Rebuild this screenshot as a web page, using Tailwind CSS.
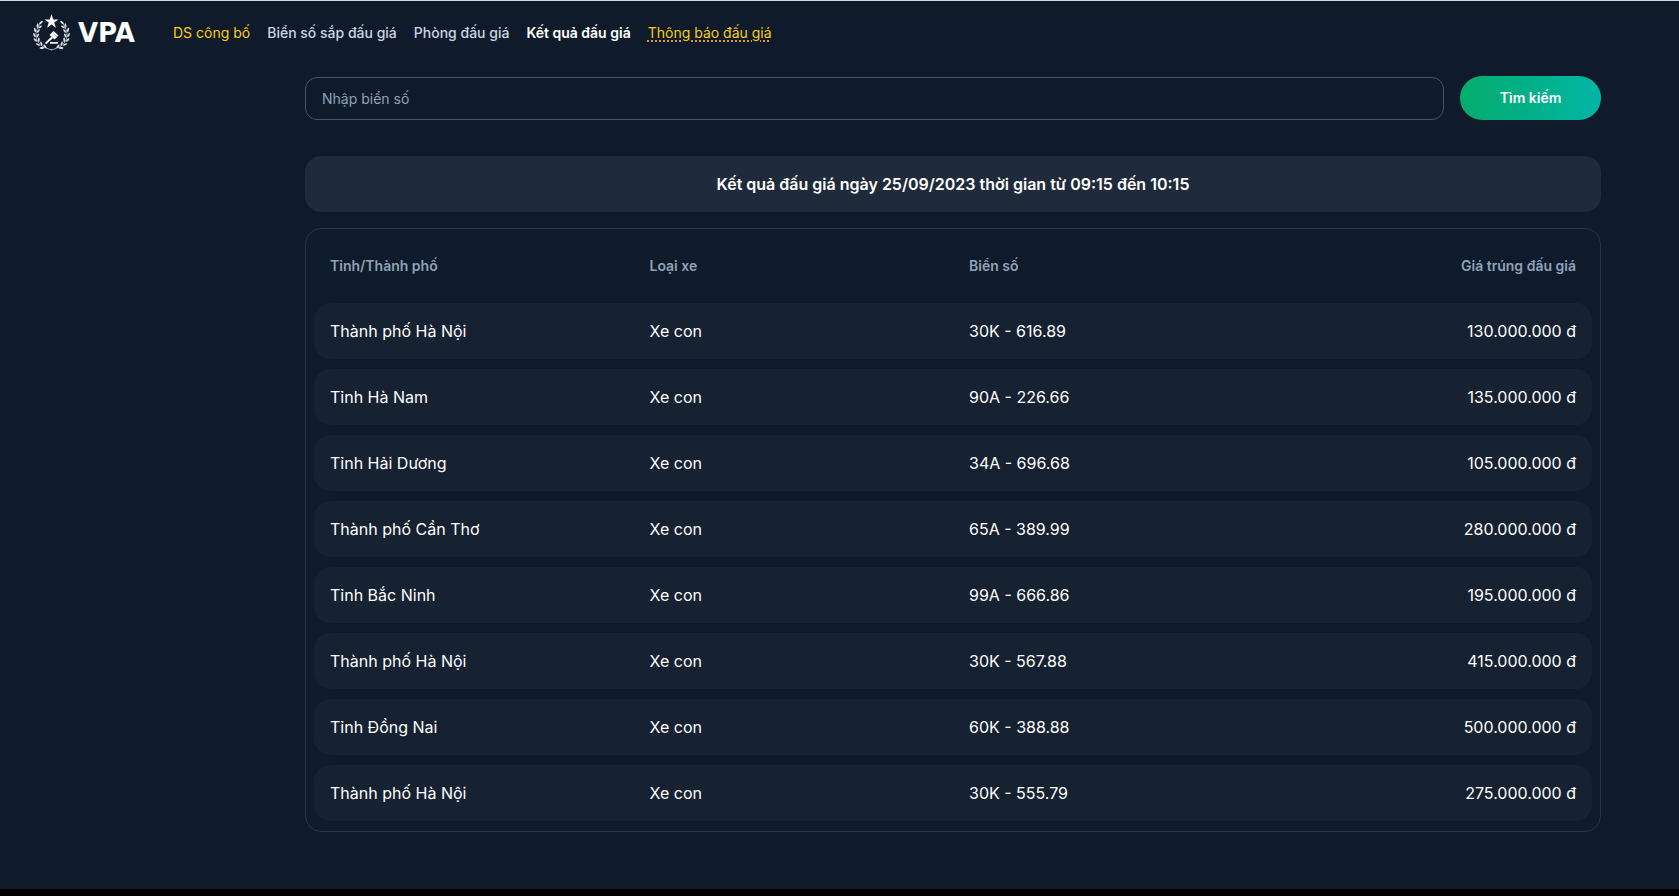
<!DOCTYPE html>
<html lang="vi">
<head>
    <meta charset="UTF-8">
    <meta name="viewport" content="width=device-width, initial-scale=1.0">
    <title>VPA - Kết quả đấu giá</title>
    <script src="https://cdn.jsdelivr.net/npm/@tailwindcss/browser@4"></script>
</head>
<body class="flex min-h-screen flex-col border-t border-b-[7px] border-t-[#d3dadb] border-b-black bg-[#0f1b2a] font-['Inter','Noto_Sans',sans-serif] text-white">

    <!-- Header -->
    <header class="flex h-16 items-center gap-8 pl-8">
        <a href="#" class="flex w-[109px] items-center gap-1.5" aria-label="VPA">
            <svg class="h-10 w-10 shrink-0" viewBox="0 0 40 40" fill="#fff">
                <defs>
                    <g id="branch">
                        <path d="M9 10C4 15 3 22 5 27C7 32 12 35 20 37" fill="none" stroke="#c3cbd3" stroke-width=".8"/>
                        <g fill="#dfe4e8">
                            <ellipse cx="9" cy="9.500" rx="2.300" ry=".9" transform="rotate(-42 9 9.500)"/>
                            <ellipse cx="5.500" cy="12.500" rx="2.200" ry=".9" transform="rotate(-80 5.500 12.500)"/>
                            <ellipse cx="8" cy="14" rx="2.200" ry=".9" transform="rotate(-35 8 14)"/>
                            <ellipse cx="3" cy="17" rx="2.200" ry=".9" transform="rotate(-105 3 17)"/>
                            <ellipse cx="6.300" cy="18" rx="2.200" ry=".9" transform="rotate(-52 6.300 18)"/>
                            <ellipse cx="2.400" cy="22" rx="2.200" ry=".9" transform="rotate(-120 2.400 22)"/>
                            <ellipse cx="5.800" cy="22.500" rx="2.200" ry=".9" transform="rotate(-68 5.800 22.500)"/>
                            <ellipse cx="3.300" cy="27" rx="2.200" ry=".9" transform="rotate(-135 3.300 27)"/>
                            <ellipse cx="6.800" cy="26.800" rx="2.200" ry=".9" transform="rotate(-88 6.800 26.800)"/>
                            <ellipse cx="6" cy="31.500" rx="2.300" ry=".9" transform="rotate(-155 6 31.500)"/>
                            <ellipse cx="9.300" cy="30.500" rx="2.200" ry=".9" transform="rotate(-110 9.300 30.500)"/>
                            <ellipse cx="10" cy="35" rx="2.500" ry=".9" transform="rotate(-178 10 35)"/>
                            <ellipse cx="13" cy="33.300" rx="2.200" ry=".9" transform="rotate(-132 13 33.300)"/>
                        </g>
                    </g>
                </defs>
                <use href="#branch"/>
                <use href="#branch" transform="matrix(-1 0 0 1 39 0)"/>
                <path d="M19.500 1l1.700 5.400h5.300l-4.300 3.200 1.700 5.200-4.400-3.200-4.400 3.200 1.700-5.200-4.300-3.200h5.300z"/>
                <path d="M21.500 18l5 4.500-1.500 1.500-5-4.500z"/>
                <path d="M20 19.500l5 4.500-2.500 2.500-5-4.500z"/>
                <path d="M19.200 23.800l1.700 1.500-6.700 5.900-1.200-1.200z"/>
                <path d="M18 29h8v1.700h-8z"/>
            </svg>
            <span class="font-['DejaVu_Sans'] text-[26px] leading-8 font-bold">VPA</span>
        </a>
        <nav class="text-sm font-medium text-slate-300">
            <ul class="flex items-center gap-[17px]">
                <li><a href="#" class="font-normal text-[#facc15]">DS công bố</a></li>
                <li><a href="#">Biển số sắp đấu giá</a></li>
                <li><a href="#">Phòng đấu giá</a></li>
                <li><a href="#" class="font-semibold text-white">Kết quả đấu giá</a></li>
                <li><a href="#" class="font-normal text-[#facc15] underline decoration-[#e8912d] decoration-dotted decoration-2 underline-offset-2">Thông báo đấu giá</a></li>
            </ul>
        </nav>
    </header>

    <main class="flex flex-1 flex-col pt-[11px] pr-[78px] pl-[305px]">
        <!-- Search -->
        <form class="flex items-end gap-4">
            <input type="text" aria-label="Nhập biển số" placeholder="Nhập biển số" class="h-[43px] min-w-0 flex-1 rounded-xl border border-slate-600 bg-transparent px-4 text-sm placeholder:text-slate-400">
            <button type="button" class="h-11 w-[141px] rounded-full bg-linear-to-r from-[#05ac6c] to-[#03b5a5] text-sm font-semibold">Tìm kiếm</button>
        </form>

        <h1 class="mt-9 rounded-2xl bg-[#1f2a3b] py-4 text-center text-base font-semibold">Kết quả đấu giá ngày 25/09/2023 thời gian từ 09:15 đến 10:15</h1>

        <!-- Results -->
        <div class="mt-4 rounded-2xl border border-[#273548] px-2">
            <table class="w-full table-fixed border-separate border-spacing-x-0 border-spacing-y-[10px] text-left">
                <thead class="text-sm text-slate-400">
                    <tr class="h-[54px]">
                        <th class="px-4 font-semibold">Tỉnh/Thành phố</th>
                        <th class="px-4 font-semibold">Loại xe</th>
                        <th class="px-4 font-semibold">Biển số</th>
                        <th class="px-4 text-right font-semibold">Giá trúng đấu giá</th>
                    </tr>
                </thead>
                <tbody id="results"></tbody>
            </table>
        </div>
    </main>

    <script>
        const results = [
            ['Thành phố Hà Nội', 'Xe con', '30K - 616.89', '130.000.000 đ'],
            ['Tỉnh Hà Nam', 'Xe con', '90A - 226.66', '135.000.000 đ'],
            ['Tỉnh Hải Dương', 'Xe con', '34A - 696.68', '105.000.000 đ'],
            ['Thành phố Cần Thơ', 'Xe con', '65A - 389.99', '280.000.000 đ'],
            ['Tỉnh Bắc Ninh', 'Xe con', '99A - 666.86', '195.000.000 đ'],
            ['Thành phố Hà Nội', 'Xe con', '30K - 567.88', '415.000.000 đ'],
            ['Tỉnh Đồng Nai', 'Xe con', '60K - 388.88', '500.000.000 đ'],
            ['Thành phố Hà Nội', 'Xe con', '30K - 555.79', '275.000.000 đ']
        ];

        document.getElementById('results').innerHTML = results.map(([province, type, plate, price]) => `
            <tr class="h-14">
                <td class="rounded-l-2xl bg-[#162132] px-4">${province}</td>
                <td class="bg-[#162132] px-4">${type}</td>
                <td class="bg-[#162132] px-4">${plate}</td>
                <td class="rounded-r-2xl bg-[#162132] px-4 text-right">${price}</td>
            </tr>
        `).join('');
    </script>
</body>
</html>
